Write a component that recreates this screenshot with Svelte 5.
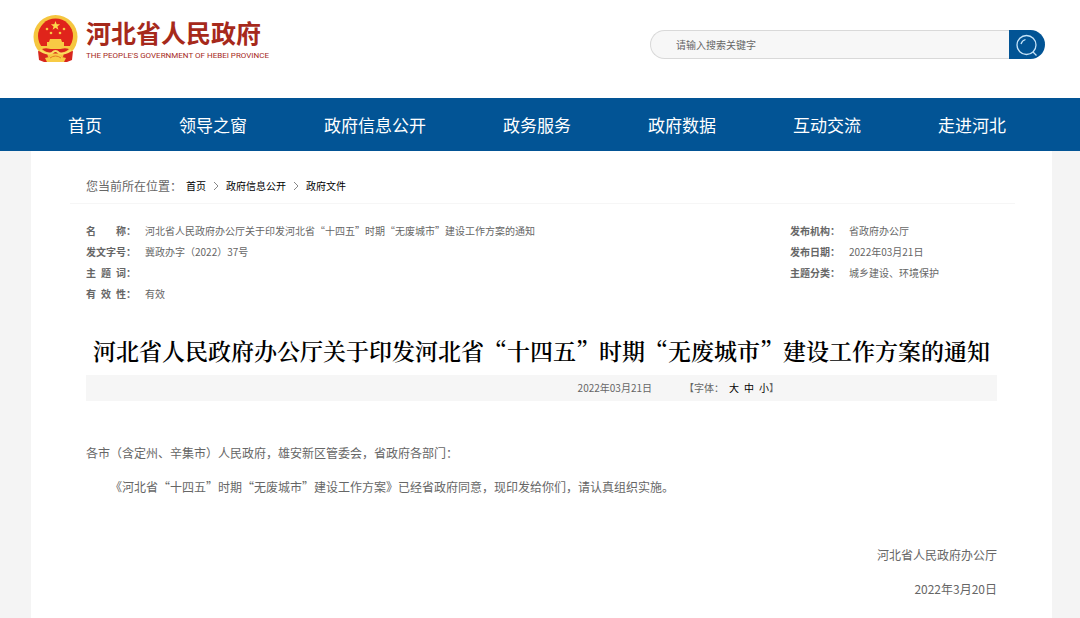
<script lang="ts">
	const navItems: string[] = ['首页', '领导之窗', '政府信息公开', '政务服务', '政府数据', '互动交流', '走进河北'];
	const crumbs: string[] = ['首页', '政府信息公开', '政府文件'];

	const title = '河北省人民政府办公厅关于印发河北省“十四五”时期“无废城市”建设工作方案的通知';

	const mainInfo = [
		{ label: '名\u2003\u2003称：', value: title },
		{ label: '发文字号：', value: '冀政办字（2022）37号' },
		{ label: '主\u2002题\u2002词：', value: '' },
		{ label: '有\u2002效\u2002性：', value: '有效' }
	];

	const sideInfo = [
		{ label: '发布机构：', value: '省政府办公厅' },
		{ label: '发布日期：', value: '2022年03月21日' },
		{ label: '主题分类：', value: '城乡建设、环境保护' }
	];

	let keyword = '';
</script>

<header class="header">
	<a class="logo" href="/">
		<svg class="emblem" viewBox="0 0 45 48" aria-hidden="true">
			<circle cx="22.500" cy="22" r="22" fill="#f5c63f" />
			<circle cx="22.500" cy="21" r="17.500" fill="#e0241b" />
			<path d="M22.500 6 l1.200 3.200 3.400.1-2.700 2.100 1 3.300-2.900-1.900-2.900 1.900 1-3.300-2.700-2.100 3.400-.1z" fill="#fbd94c" />
			<g fill="#f8c944">
				<circle cx="14" cy="14" r="1.300" />
				<circle cx="31" cy="14" r="1.300" />
				<circle cx="18" cy="18" r="1.300" />
				<circle cx="27" cy="18" r="1.300" />
				<path d="M17 24h11l1 3h2v4H14v-4h2z" />
				<path d="M8 31h29v3H8z" />
			</g>
			<path d="M5 36 L14 38 L15 42 L22.500 41 L30 42 L31 38 L40 36 L39 45 L34 47 H11 L6 45Z" fill="#d7261e" />
			<path d="M9 34 Q15 32 22.500 36 Q30 32 36 34 Q31 39 22.500 38 Q14 39 9 34Z" fill="#d7261e" />
			<path d="M7 35 Q13 40 19 38 Q22.500 34 26 38 Q32 40 38 35" fill="none" stroke="#fbdc60" stroke-width="2" />
			<path d="M19 39h7l3 3 4 1-2 4H14l-2-4 4-1z" fill="#f8cb45" />
			<path d="M17 43 Q22.500 39 28 43" fill="none" stroke="#e47b25" />
		</svg>
		<span class="logo-text">
			<span class="logo-cn">河北省人民政府</span>
			<span class="logo-en">THE PEOPLE'S GOVERNMENT OF HEBEI PROVINCE</span>
		</span>
	</a>
	<form class="search" on:submit|preventDefault>
		<input type="text" aria-label="搜索" placeholder="请输入搜索关键字" bind:value={keyword} />
		<button type="submit" aria-label="搜索">
			<svg viewBox="0 0 24 24" aria-hidden="true">
				<circle cx="11.500" cy="12" r="9.500" />
				<path d="M18 19 L21.500 22.500 M6 11 Q7 7.500 10.500 6.500" />
			</svg>
		</button>
	</form>
</header>

<nav class="nav">
	{#each navItems as item}
		<a href="/">{item}</a>
	{/each}
</nav>

<div class="page">
	<main class="container">
		<div class="crumbs">
			<span class="crumbs-label">您当前所在位置：</span>
			{#each crumbs as crumb, index}
				{#if index > 0}
					<svg class="arrow" viewBox="0 0 6 10" aria-hidden="true"><path d="M1 1 L5 5 L1 9" /></svg>
				{/if}
				<a href="/">{crumb}</a>
			{/each}
		</div>

		<div class="info">
			<dl class="info-main">
				{#each mainInfo as row}
					<div class="row"><dt>{row.label}</dt><dd>{row.value}</dd></div>
				{/each}
			</dl>
			<dl class="info-side">
				{#each sideInfo as row}
					<div class="row"><dt>{row.label}</dt><dd>{row.value}</dd></div>
				{/each}
			</dl>
		</div>

		<article>
			<h1>{title}</h1>
			<div class="meta">
				<time datetime="2022-03-21">2022年03月21日</time>
				<div class="sizes">
					<span>【字体：</span>
					<button type="button">大</button>
					<button type="button">中</button>
					<button type="button">小</button><span>】</span>
				</div>
			</div>
			<div class="content">
				<p>各市（含定州、辛集市）人民政府，雄安新区管委会，省政府各部门：</p>
				<p class="indent">《河北省“十四五”时期“无废城市”建设工作方案》已经省政府同意，现印发给你们，请认真组织实施。</p>
				<div class="sign">
					<p>河北省人民政府办公厅</p>
					<p>2022年3月20日</p>
				</div>
			</div>
		</article>
	</main>
</div>

<style>
	:global(body) {
		margin: 0;
		background: #f4f4f4;
		color: #666;
		font-family: "Noto Sans CJK SC", sans-serif;
		font-size: 10px;
	}

	a {
		color: inherit;
		text-decoration: none;
	}

	button {
		padding: 0;
		border: 0;
		font: inherit;
		cursor: pointer;
	}

	.header {
		display: flex;
		align-items: flex-start;
		justify-content: space-between;
		box-sizing: border-box;
		height: 98px;
		padding: 15px 35px 0 33px;
		background: #fff;
	}

	.logo {
		display: flex;
		gap: 8px;
		color: #a6291b;
	}

	.emblem {
		width: 45px;
		height: 48px;
	}

	.logo-text {
		display: flex;
		flex-direction: column;
		white-space: nowrap;
	}

	.logo-cn {
		font-size: 25px;
		font-weight: 700;
		line-height: 34px;
	}

	.logo-en {
		font-family: Roboto, "Open Sans", sans-serif;
		font-size: 8px;
		line-height: 14px;
	}

	.search {
		display: flex;
		width: 395px;
		height: 29px;
		margin-top: 15px;
	}

	.search input {
		flex: 1;
		min-width: 0;
		padding: 0 25px;
		border: 1px solid #d9d9d9;
		border-right: 0;
		border-radius: 15px 0 0 15px;
		background: #f7f7f7;
		color: #666;
		font: inherit;
		outline: none;
	}

	.search input::placeholder {
		color: #666;
		opacity: 1;
	}

	.search button {
		display: flex;
		align-items: center;
		justify-content: center;
		width: 36px;
		border-radius: 0 15px 15px 0;
		background: #025495;
	}

	.search svg {
		width: 24px;
		height: 24px;
		fill: none;
		stroke: #c5e3f8;
		stroke-width: 1.3;
	}

	.nav {
		display: flex;
		justify-content: space-between;
		padding: 0 74px 0 68px;
		background: #025495;
		color: #fff;
		font-size: 17px;
		line-height: 53px;
	}

	.page {
		padding: 0 28px 0 31px;
	}

	.container {
		padding: 18px 37px 24px 39px;
		background: #fff;
	}

	.crumbs {
		display: flex;
		align-items: center;
		padding: 0 16px;
		border-bottom: 1px solid #f6f6f6;
		color: #000;
		line-height: 34px;
	}

	.crumbs-label {
		margin-right: 4px;
		color: #666;
		font-size: 12px;
	}

	.arrow {
		width: 6px;
		height: 10px;
		margin: 0 7px;
		fill: none;
		stroke: #888;
	}

	.info {
		display: flex;
		justify-content: space-between;
		padding: 16px 16px 0;
		line-height: 21px;
	}

	dl,
	dd {
		margin: 0;
	}

	.info-side {
		width: 209px;
	}

	.row {
		display: flex;
	}

	dt {
		width: 59px;
		font-weight: 700;
	}

	article {
		padding: 0 18px 0 16px;
	}

	h1 {
		margin: 29px 0 6px;
		color: #000;
		font-family: "Noto Serif CJK SC", "Noto Sans CJK SC", serif;
		font-size: 23px;
		font-weight: 600;
		line-height: 36px;
		text-align: center;
	}

	.meta {
		display: flex;
		justify-content: flex-end;
		gap: 32px;
		padding-right: 218px;
		background: #f6f6f6;
		line-height: 26px;
	}

	.sizes {
		display: flex;
	}

	.sizes button {
		margin-left: 5px;
		background: none;
		color: #000;
	}

	.content {
		padding-top: 35px;
		font-size: 12px;
		line-height: 34px;
	}

	p {
		margin: 0;
	}

	.indent {
		text-indent: 2em;
	}

	.sign {
		margin-top: 34px;
		text-align: right;
	}
</style>
